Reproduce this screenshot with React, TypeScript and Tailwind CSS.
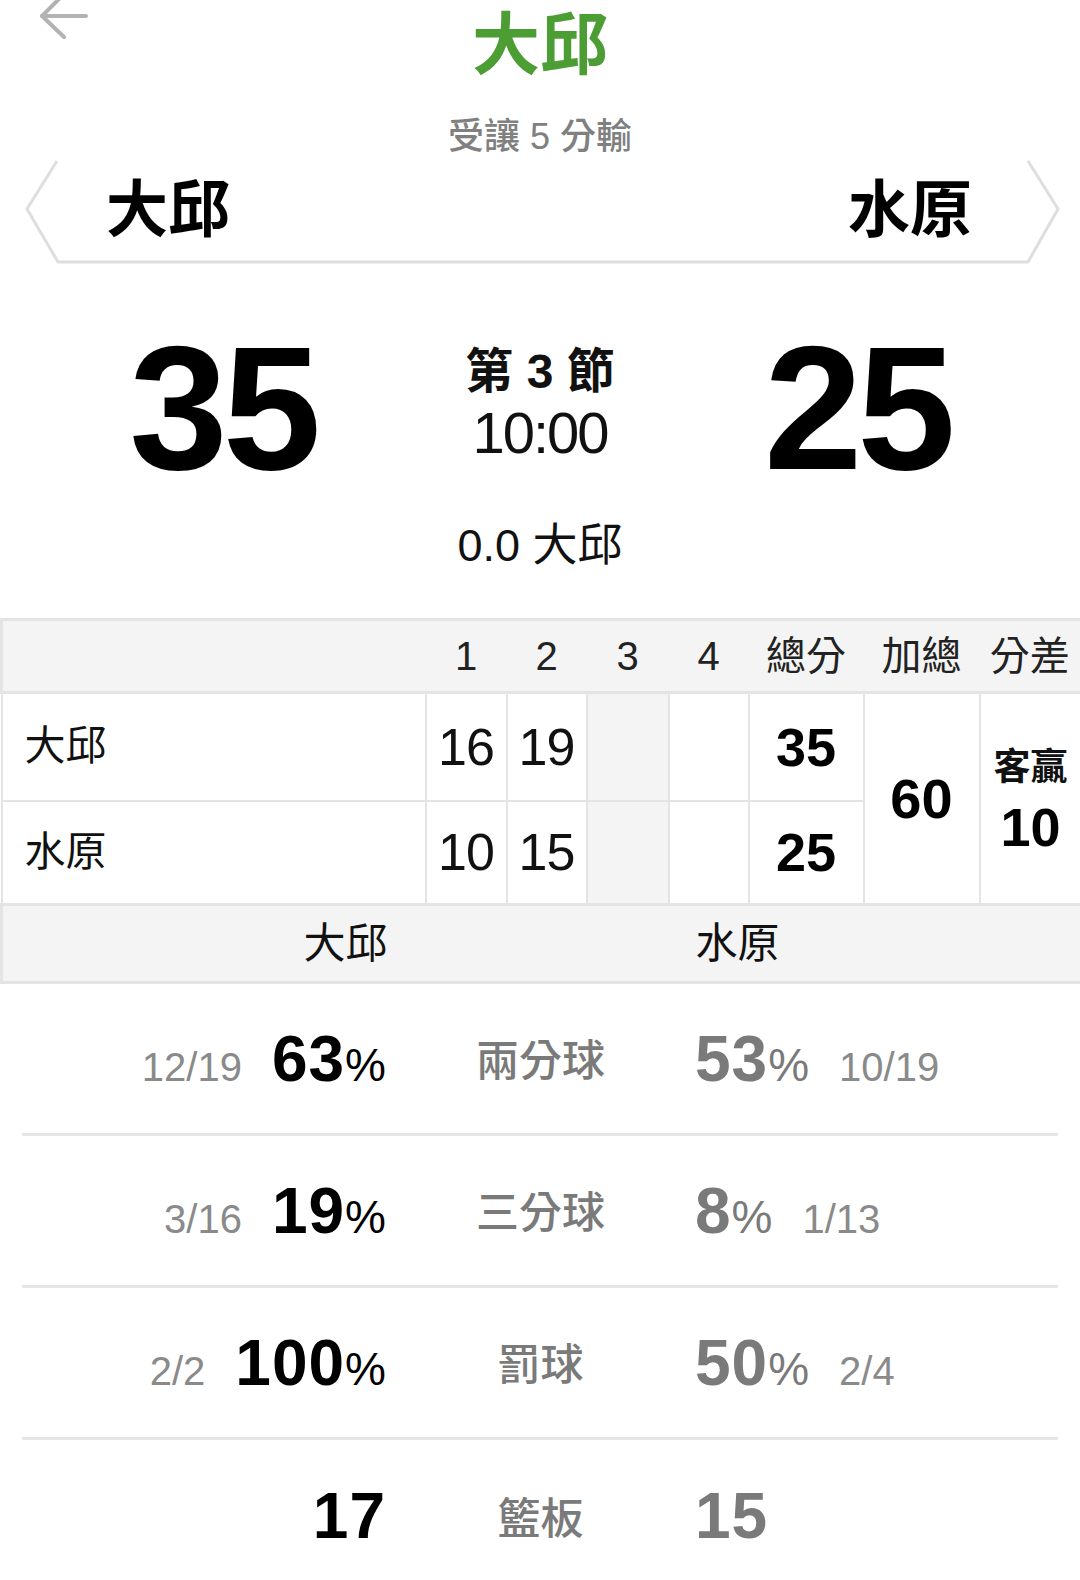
import React from "react";

const font = "font-['Liberation_Sans','Noto_Sans_CJK_TC',sans-serif]";

const stats = [
  { lf: "12/19", lp: "63", label: "兩分球", rp: "53", rf: "10/19", pct: true },
  { lf: "3/16", lp: "19", label: "三分球", rp: "8", rf: "1/13", pct: true },
  { lf: "2/2", lp: "100", label: "罰球", rp: "50", rf: "2/4", pct: true },
  { lf: "", lp: "17", label: "籃板", rp: "15", rf: "", pct: false },
];

function BackArrow() {
  return (
    <svg
      className="absolute left-0 top-0"
      width="100"
      height="45"
      viewBox="0 0 100 45"
      fill="none"
      stroke="#b3b3b3"
      strokeWidth="4"
      strokeLinecap="round"
      strokeLinejoin="round"
    >
      <path d="M42 16H86" />
      <path d="M64 -6L42 16L64 37" />
    </svg>
  );
}

function Banner() {
  return (
    <div className="relative mt-[4px] h-[105px]">
      <svg
        className="absolute inset-0"
        width="1080"
        height="105"
        viewBox="0 0 1080 105"
        fill="none"
        stroke="#dedede"
        strokeWidth="3"
      >
        <polyline points="57,2 27,50 58,103 1028,103 1058,50 1028,2" />
      </svg>
      <div className="relative flex h-full items-center justify-between pl-[106px] pr-[108px] pb-[2px]">
        <span className="text-[62px] font-bold leading-none text-black">大邱</span>
        <span className="text-[62px] font-bold leading-none text-black">水原</span>
      </div>
    </div>
  );
}

function Scores() {
  return (
    <div className="mt-[56px] grid grid-cols-3 px-[64px]">
      <div className="text-center text-[177px] font-bold leading-none tracking-[-5px] text-black">35</div>
      <div className="mt-[28px] flex flex-col items-center">
        <div className="text-[48px] font-bold leading-none text-[#111]">第 3 節</div>
        <div className="mt-[8px] text-[58px] leading-none tracking-[-2px] text-[#111]">10:00</div>
      </div>
      <div className="text-center text-[177px] font-bold leading-none tracking-[-5px] text-black">25</div>
    </div>
  );
}

function BoxScore() {
  const head = ["1", "2", "3", "4", "總分", "加總", "分差"];
  const cell = "border-2 border-[#e4e4e4] text-center";
  return (
    <table className="mt-[50px] w-[1080px] table-fixed border-collapse">
      <colgroup>
        <col className="w-[424px]" />
        <col className="w-[81px]" />
        <col className="w-[80px]" />
        <col className="w-[82px]" />
        <col className="w-[80px]" />
        <col className="w-[115px]" />
        <col className="w-[116px]" />
        <col className="w-[102px]" />
      </colgroup>
      <tbody>
        <tr className="h-[73px] border-[3px] border-[#e4e4e4] bg-[#f4f4f4]">
          <td />
          {head.map((h) => (
            <td key={h} className="text-center text-[40px] leading-none text-[#222]">
              {h}
            </td>
          ))}
        </tr>
        <tr className="h-[108px]">
          <td className="border-2 border-[#e4e4e4] pl-[22px] text-[41px] leading-none text-[#111]">大邱</td>
          <td className={`${cell} text-[52px] leading-none tracking-[-1px] text-[#111]`}>16</td>
          <td className={`${cell} text-[52px] leading-none tracking-[-1px] text-[#111]`}>19</td>
          <td className={`${cell} bg-[#f4f4f4]`} />
          <td className={cell} />
          <td className={`${cell} text-[54px] font-bold leading-none text-black`}>35</td>
          <td rowSpan={2} className={`${cell} text-[56px] font-bold leading-none text-black`}>
            60
          </td>
          <td rowSpan={2} className={cell}>
            <div className="flex flex-col items-center pt-[6px]">
              <span className="text-[37px] font-bold leading-none text-[#111]">客贏</span>
              <span className="mt-[14px] text-[54px] font-bold leading-none text-black">10</span>
            </div>
          </td>
        </tr>
        <tr className="h-[104px]">
          <td className="border-2 border-[#e4e4e4] pl-[22px] text-[41px] leading-none text-[#111]">水原</td>
          <td className={`${cell} text-[52px] leading-none tracking-[-1px] text-[#111]`}>10</td>
          <td className={`${cell} text-[52px] leading-none tracking-[-1px] text-[#111]`}>15</td>
          <td className={`${cell} bg-[#f4f4f4]`} />
          <td className={cell} />
          <td className={`${cell} text-[54px] font-bold leading-none text-black`}>25</td>
        </tr>
        <tr className="h-[78px] border-[3px] border-[#e4e4e4] bg-[#f4f4f4]">
          <td colSpan={8}>
            <div className="flex justify-center">
              <span className="w-[392px] text-center text-[42px] leading-none text-[#111]">大邱</span>
              <span className="w-[392px] text-center text-[42px] leading-none text-[#111]">水原</span>
            </div>
          </td>
        </tr>
      </tbody>
    </table>
  );
}

function Stats() {
  return (
    <div className="mx-[22px]">
      {stats.map((s, i) => (
        <div
          key={s.label}
          className={`grid h-[152px] grid-cols-[364px_309px_1fr] items-center ${
            i < stats.length - 1 ? "border-b-[3px] border-[#e6e6e6]" : ""
          }`}
        >
          <div className="flex items-baseline justify-end gap-[30px]">
            {s.lf && <span className="text-[40px] leading-none text-[#8a8a8a]">{s.lf}</span>}
            <span className="text-[64px] font-bold leading-none tracking-[1px] text-black">
              {s.lp}
              {s.pct && <span className="text-[46px] font-normal tracking-normal">%</span>}
            </span>
          </div>
          <div className="pt-[6px] text-center text-[43px] font-medium leading-none text-[#7a7a7a]">{s.label}</div>
          <div className="flex items-baseline gap-[30px]">
            <span className="text-[64px] font-bold leading-none tracking-[1px] text-[#7a7a7a]">
              {s.rp}
              {s.pct && <span className="text-[46px] font-normal tracking-normal">%</span>}
            </span>
            {s.rf && <span className="text-[40px] leading-none text-[#8a8a8a]">{s.rf}</span>}
          </div>
        </div>
      ))}
    </div>
  );
}

export default function App() {
  return (
    <div className={`h-[1580px] w-[1080px] overflow-hidden bg-white ${font}`}>
      <header className="relative flex flex-col items-center pt-[11px]">
        <BackArrow />
        <h1 className="text-[68px] font-bold leading-none text-[#4c9e34]">大邱</h1>
        <p className="mt-[40px] text-[36px] font-medium leading-none text-[#808080]">受讓 5 分輸</p>
      </header>
      <Banner />
      <Scores />
      <div className="mt-[26px] text-center text-[45px] leading-none text-[#111]">0.0 大邱</div>
      <BoxScore />
      <Stats />
    </div>
  );
}
